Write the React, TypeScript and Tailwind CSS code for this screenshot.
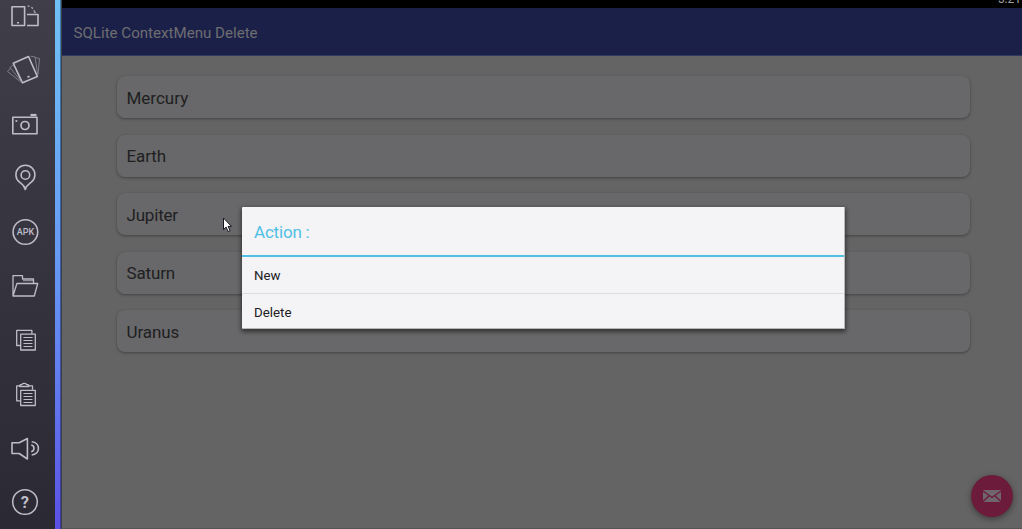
import type { ReactNode } from "react";

const planets = [
  { name: "Mercury", tracking: "tracking-normal" },
  { name: "Earth", tracking: "tracking-[-0.1px]" },
  { name: "Jupiter", tracking: "tracking-[-0.2px]" },
  { name: "Saturn", tracking: "tracking-[-0.15px]" },
  { name: "Uranus", tracking: "tracking-[-0.1px]" },
];

function Tool({ label, children }: { label: string; children: ReactNode }) {
  return (
    <button aria-label={label} className="block h-[54px] w-[55px] shrink-0">
      <svg
        width="55"
        height="54"
        viewBox="0 0 55 54"
        fill="none"
        stroke="#bdbcc8"
        strokeWidth="1.6"
        strokeLinejoin="round"
      >
        {children}
      </svg>
    </button>
  );
}

function Sidebar() {
  return (
    <nav className="flex h-full w-[55px] shrink-0 flex-col overflow-hidden bg-linear-to-b from-[#403f49] to-[#2a2934]">
      <div className="-mt-[11px] flex flex-col">
        <Tool label="Rotate">
          <rect x="12" y="17.7" width="12.6" height="18.8" />
          <path d="M27 25.5h11v11H27" />
          <path d="M17 33.8h2" />
          <path d="M27.7 17.1h1.800M31.500 18.300l1.300 1.300M33.800 21.200l.7 1.300M34.300 23.300h1.400" strokeWidth="1.300" />
        </Tool>
        <Tool label="Shake">
          <path d="M13.300 20.300l15.200-6.800 8.900 20-14.900 6.300z" />
          <path d="M27.500 34.300l2-1" strokeWidth="1.700" />
          <g strokeWidth="0.900" stroke="#85848f">
            <path d="M13 22l-3 2.600 11.500 14.200" />
            <path d="M10.500 25l-3 3.500 14 11" />
            <path d="M30.500 13.200l4.500.700 2.800 18" />
            <path d="M35 14.500l4.500 1-1.500 16" />
          </g>
        </Tool>
        <Tool label="Screenshot">
          <rect x="12.800" y="20.300" width="24.200" height="16.500" />
          <circle cx="25" cy="28.500" r="4" strokeWidth="1.700" />
          <path d="M30.500 18h6" strokeWidth="2.200" />
          <path d="M15.500 24h1.800" strokeWidth="1.800" />
        </Tool>
        <Tool label="Location">
          <path d="M25.300 38.500c-1-4.500-3.300-5.300-5.800-7.300a9.500 9.500 0 1 1 11.800 0c-2.500 2-5 2.800-6 7.300z" />
          <circle cx="25.400" cy="24" r="4.300" />
        </Tool>
        <Tool label="Install APK">
          <circle cx="25.400" cy="27" r="12.300" />
          <text
            x="25.500"
            y="30.300"
            textAnchor="middle"
            textLength="17.500"
            lengthAdjust="spacingAndGlyphs"
            fill="#bdbcc8"
            stroke="none"
            className="font-['Roboto',sans-serif] text-[9.500px] font-medium"
          >
            APK
          </text>
        </Tool>
        <Tool label="Files">
          <path d="M13 37V16.700h9.500v3.300H33.500v5M13 37l3.900-12.500h20.800L34.300 37z" strokeWidth="1.300" />
          <path d="M23 21.700h10" strokeWidth="0.800" />
        </Tool>
        <Tool label="Copy">
          <path d="M20.300 32.500h-3.600V17.400h15.200v3.500" strokeWidth="1.300" />
          <rect x="20.700" y="21.200" width="14.600" height="15.800" strokeWidth="1.300" />
          <path d="M23.500 24.500h9M23.500 27.500h9M23.500 30.500h9M23.500 33.500h9" strokeWidth="1.100" />
        </Tool>
        <Tool label="Paste">
          <path d="M20.300 33.800h-3.600V18.800h3.300M29 18.800h3.500v4" strokeWidth="1.300" />
          <path d="M19.800 19.500c-.8-1.500.5-2 2-2 .8-1.500 4-1.500 4.800 0 1.700 0 3 .5 2.300 2z" strokeWidth="1.300" />
          <rect x="20.700" y="23.300" width="14.600" height="15.200" strokeWidth="1.300" />
          <path d="M23.500 26.500h9M23.500 29.500h9M23.500 32.500h9M23.500 35.500h9" strokeWidth="1.100" />
        </Tool>
        <Tool label="Volume">
          <path d="M12 21.700h7.200l8.200-4.200v20.500L19.200 32.500H12z" />
          <path d="M31.200 24c3.700.7 3.700 6 0 6.700M31.700 20.700c9 .8 9 12.500 0 13.300" />
        </Tool>
        <Tool label="Help">
          <circle cx="25" cy="27" r="12.300" />
          <text
            x="24.800"
            y="32.800"
            textAnchor="middle"
            fill="#bdbcc8"
            stroke="none"
            className="font-['Roboto',sans-serif] text-[16.500px] font-bold"
          >
            ?
          </text>
        </Tool>
      </div>
    </nav>
  );
}

function ActionDialog() {
  return (
    <div
      role="dialog"
      className="absolute top-[207px] left-[242px] flex h-[122px] w-[603px] flex-col rounded-[1px] border-r border-b border-[#b8b8b9] bg-[#f4f4f7] text-[#202022] shadow-[0_2px_4px_1px_rgba(0,0,0,0.5)]"
    >
      <h2 className="flex h-[50px] shrink-0 items-center border-b-2 border-[#4fc0e3] pl-[12px] text-[17px] tracking-[-0.2px] text-[#4fc0e3]">
        <span className="pt-[3px]">Action :</span>
      </h2>
      <button className="h-[37px] shrink-0 border-b border-[#dddde0] pt-[2px] pl-[12px] text-left text-[13.300px]">
        New
      </button>
      <button className="h-[34px] pt-[3px] pl-[12px] text-left text-[13.300px]">Delete</button>
    </div>
  );
}

export default function App() {
  return (
    <div className="relative flex h-[529px] w-[1022px] overflow-hidden bg-[#646464] font-['Roboto',sans-serif]">
      <Sidebar />
      <div className="w-[5px] shrink-0 bg-linear-to-b from-[#70c2f5] via-[#6698f4] to-[#5b50e5]" />
      <div className="w-px shrink-0 bg-linear-to-b from-[#3a7eae] via-[#3a5ca8] to-[#3c38a0]" />
      <main className="flex min-w-0 grow flex-col border-b border-l border-b-[#555555] border-l-[#3c4048]">
        <div className="flex h-[8px] shrink-0 justify-end overflow-hidden bg-black pr-px">
          <span className="-mt-[9px] text-[12px] leading-[16px] text-[#a0a0a0]">5:21</span>
        </div>
        <header className="flex h-[48px] shrink-0 items-center border-b border-[#303b60] bg-[#1b2049] pl-[11.500px] text-[15.100px] text-[#6e6e70]">
          <h1 className="pt-[3px]">SQLite ContextMenu Delete</h1>
        </header>
        <ul className="flex flex-col gap-[16.500px] pt-[20px] pr-[52px] pl-[55px]">
          {planets.map(({ name, tracking }) => (
            <li
              key={name}
              className={`flex h-[42px] items-center rounded-[8px] bg-[#68686a] pt-[3px] pl-[9.500px] text-[17px] text-[#202020] shadow-[0_1px_3px_rgba(0,0,0,0.35)] ${tracking}`}
            >
              {name}
            </li>
          ))}
        </ul>
      </main>
      <button
        aria-label="Compose"
        className="absolute top-[475px] left-[971px] flex size-[42px] items-center justify-center rounded-full bg-[#6c1b3a] shadow-[0_2px_6px_rgba(0,0,0,0.4)]"
      >
        <svg width="18" height="12" viewBox="0 0 18 12">
          <rect width="18" height="12" rx="1" fill="#70656a" />
          <path
            d="M0 1l9 6.500L18 1M0 11.500l6.500-6M18 11.500l-6.500-6"
            fill="none"
            stroke="#6c1b3a"
            strokeWidth="1.300"
          />
        </svg>
      </button>
      <ActionDialog />
      <svg className="absolute top-[217px] left-[222px]" width="12" height="17" viewBox="0 0 12 17">
        <path
          d="M1.500 1v11.500l2.600-2.400 2 4.400 2-.9-2-4.200h3.400z"
          fill="#fff"
          stroke="#15151f"
          strokeWidth="1"
        />
      </svg>
    </div>
  );
}
